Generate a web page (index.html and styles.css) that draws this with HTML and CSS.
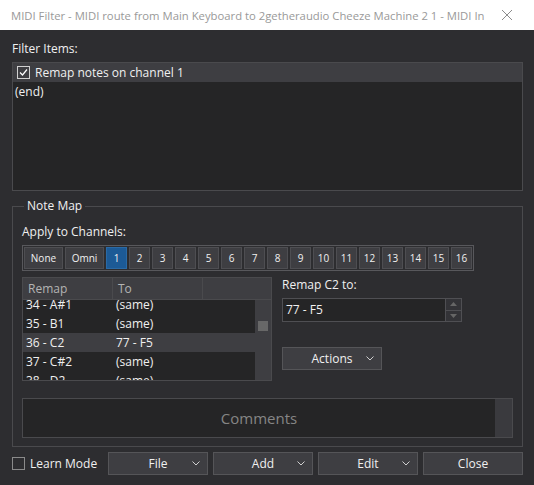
FILE: index.html
```html
<!DOCTYPE html>
<html lang="en">
<head>
    <meta charset="UTF-8">
    <title>MIDI Filter</title>
    <link rel="stylesheet" href="styles.css">
</head>
<body>
    <div class="window">
        <header class="titlebar">
            <span class="title">MIDI Filter - MIDI route from Main Keyboard to 2getheraudio Cheeze Machine 2 1 - MIDI In</span>
            <svg class="close-icon" width="12" height="12" viewBox="0 0 12 12">
                <path d="M1 1 L11 11 M11 1 L1 11" stroke="#8c8c8c" stroke-width="1" fill="none"/>
            </svg>
        </header>

        <main class="dialog">
            <div class="label">Filter Items:</div>
            <div class="filter-list">
                <div class="filter-row selected">
                    <span class="check">
                        <svg width="11" height="11" viewBox="0 0 11 11">
                            <path d="M2 5.5 L4.5 8 L9 2.5" stroke="#ffffff" stroke-width="1.2" fill="none"/>
                        </svg>
                    </span>
                    Remap notes on channel 1
                </div>
                <div class="filter-row">(end)</div>
            </div>

            <fieldset class="group">
                <legend>Note Map</legend>
                <div class="label">Apply to Channels:</div>
                <div class="channels">
                    <button class="ch wide">None</button>
                    <button class="ch wide">Omni</button>
                    <button class="ch active">1</button>
                    <button class="ch">2</button>
                    <button class="ch">3</button>
                    <button class="ch">4</button>
                    <button class="ch">5</button>
                    <button class="ch">6</button>
                    <button class="ch">7</button>
                    <button class="ch">8</button>
                    <button class="ch">9</button>
                    <button class="ch">10</button>
                    <button class="ch">11</button>
                    <button class="ch">12</button>
                    <button class="ch">13</button>
                    <button class="ch">14</button>
                    <button class="ch">15</button>
                    <button class="ch">16</button>
                </div>

                <div class="map-row">
                    <div class="note-list">
                        <div class="note-head">
                            <span class="col">Remap</span>
                            <span class="col">To</span>
                            <span class="col last"></span>
                        </div>
                        <div class="note-body">
                            <div class="note-rows">
                                <div class="note-row"><span>34 - A#1</span><span>(same)</span></div>
                                <div class="note-row"><span>35 - B1</span><span>(same)</span></div>
                                <div class="note-row selected"><span>36 - C2</span><span>77 - F5</span></div>
                                <div class="note-row"><span>37 - C#2</span><span>(same)</span></div>
                                <div class="note-row"><span>38 - D2</span><span>(same)</span></div>
                            </div>
                            <div class="scrollbar"><div class="thumb"></div></div>
                        </div>
                    </div>

                    <div class="remap-side">
                        <div class="label">Remap C2 to:</div>
                        <div class="spin">
                            <span class="spin-value">77 - F5</span>
                            <div class="spin-buttons">
                                <span class="spin-btn">
                                    <svg width="7" height="4" viewBox="0 0 7 4"><path d="M0 4 L3.5 0 L7 4 Z" fill="#666"/></svg>
                                </span>
                                <span class="spin-btn">
                                    <svg width="7" height="4" viewBox="0 0 7 4"><path d="M0 0 L3.5 4 L7 0 Z" fill="#666"/></svg>
                                </span>
                            </div>
                        </div>
                        <button class="drop actions">
                            <span>Actions</span>
                            <svg class="chev" width="8" height="5" viewBox="0 0 8 5"><path d="M0.5 0.5 L4 4 L7.5 0.5" stroke="#cfcfcf" fill="none"/></svg>
                        </button>
                    </div>
                </div>

                <div class="comments">
                    <div class="comments-text">Comments</div>
                    <div class="comments-scroll"></div>
                </div>
            </fieldset>

            <div class="bottom-bar">
                <label class="learn">
                    <span class="box"></span>
                    Learn Mode
                </label>
                <button class="drop">
                    <span>File</span>
                    <svg class="chev" width="8" height="5" viewBox="0 0 8 5"><path d="M0.5 0.5 L4 4 L7.5 0.5" stroke="#cfcfcf" fill="none"/></svg>
                </button>
                <button class="drop">
                    <span>Add</span>
                    <svg class="chev" width="8" height="5" viewBox="0 0 8 5"><path d="M0.5 0.5 L4 4 L7.5 0.5" stroke="#cfcfcf" fill="none"/></svg>
                </button>
                <button class="drop">
                    <span>Edit</span>
                    <svg class="chev" width="8" height="5" viewBox="0 0 8 5"><path d="M0.5 0.5 L4 4 L7.5 0.5" stroke="#cfcfcf" fill="none"/></svg>
                </button>
                <button class="plain">Close</button>
            </div>
        </main>
    </div>
</body>
</html>
```

FILE: styles.css
```css
/* General */
* {
    box-sizing: border-box;
}

body {
    margin: 0;
    padding: 0;
    background-color: #2d2d30;
    font-family: 'Open Sans', 'Noto Sans', sans-serif;
    font-size: 12px;
    color: #f0f0f0;
}

button {
    font-family: inherit;
    color: #f0f0f0;
    cursor: pointer;
}

.window {
    width: 534px;
    height: 485px;
    overflow: hidden;
}

/* Title bar */
.titlebar {
    height: 30px;
    background-color: #ffffff;
    display: flex;
    align-items: center;
    justify-content: space-between;
    padding: 0 21px 0 11px;
}

.title {
    color: #999999;
    font-size: 11.3px;
    white-space: nowrap;
}

/* Dialog body */
.dialog {
    padding: 11px 11px 0 12px;
}

.label {
    height: 16px;
    line-height: 16px;
    margin-bottom: 5px;
}

.filter-list {
    height: 129px;
    border: 1px solid #4a4a4d;
    background-color: #252526;
}

.filter-row {
    height: 19px;
    line-height: 19px;
    padding-left: 2px;
    display: flex;
    align-items: center;
}

.filter-row.selected {
    background-color: #3e3e42;
}

.check {
    width: 13px;
    height: 13px;
    border: 1px solid #d0d0d0;
    margin: 0 5px 0 2px;
    display: flex;
    align-items: center;
    justify-content: center;
}

/* Note Map group */
.group {
    margin: 7px 0 0 0;
    padding: 10px 9px 8px 9px;
    border: 1px solid #4a4a4d;
    min-width: 0;
}

.group legend {
    margin-left: 2px;
    padding: 0 3px;
    line-height: 16px;
}

.channels {
    display: flex;
    gap: 2px;
    width: 452px;
    padding: 1px;
    border: 1px solid #58585c;
}

.ch {
    width: 21px;
    height: 22px;
    padding: 0;
    font-size: 10px;
    background-color: #3e3e42;
    border: 1px solid #4e4e52;
}

.ch.wide {
    width: 39px;
}

.ch.active {
    background-color: #1c5a96;
    border-color: #2a6aa6;
}

.map-row {
    display: flex;
    margin-top: 6px;
    gap: 10px;
}

/* Note list */
.note-list {
    width: 250px;
    height: 104px;
    border: 1px solid #4a4a4d;
    display: flex;
    flex-direction: column;
}

.note-head {
    height: 22px;
    display: flex;
    background-color: #3e3e42;
    border-bottom: 1px solid #4a4a4d;
    color: #b4b4b4;
}

.note-head .col {
    width: 90px;
    padding-left: 5px;
    line-height: 22px;
    border-right: 1px solid #4a4a4d;
}

.note-head .col.last {
    flex: 1;
    border-right: none;
}

.note-body {
    flex: 1;
    display: flex;
    overflow: hidden;
}

.note-rows {
    flex: 1;
    background-color: #252526;
    overflow: hidden;
}

.note-row {
    height: 19px;
    line-height: 19px;
    display: flex;
    padding-left: 3px;
}

.note-row:first-child {
    margin-top: -5px;
}

.note-row span {
    width: 90px;
}

.note-row.selected {
    background-color: #3e3e42;
}

.scrollbar {
    width: 16px;
    background-color: #3e3e42;
    padding: 21px 0 0 3px;
}

.thumb {
    width: 10px;
    height: 10px;
    background-color: #686868;
}

/* Right side of the map */
.remap-side {
    width: 180px;
}

.remap-side .label {
    margin-bottom: 5px;
}

.spin {
    height: 24px;
    display: flex;
    border: 1px solid #4f4f53;
    background-color: #252526;
}

.spin-value {
    flex: 1;
    padding-left: 3px;
    line-height: 22px;
}

.spin-buttons {
    width: 16px;
    border-left: 1px solid #4f4f53;
    display: flex;
    flex-direction: column;
}

.spin-btn {
    flex: 1;
    display: flex;
    align-items: center;
    justify-content: center;
    background-color: #333337;
}

.spin-btn + .spin-btn {
    border-top: 1px solid #4f4f53;
}

.drop, .plain {
    position: relative;
    width: 100px;
    height: 23px;
    padding: 0;
    font-size: 12px;
    background-color: #3e3e42;
    border: 1px solid #555558;
}

.drop .chev {
    position: absolute;
    right: 7px;
    top: 8px;
}

.actions {
    margin-top: 25px;
    display: block;
}

/* Comments */
.comments {
    margin-top: 17px;
    height: 40px;
    display: flex;
    border: 1px solid #4a4a4d;
    background-color: #252526;
}

.comments-text {
    flex: 1;
    text-align: center;
    line-height: 38px;
    font-size: 15px;
    color: #858585;
}

.comments-scroll {
    width: 17px;
    background-color: #3a3a3e;
}

/* Bottom bar */
.bottom-bar {
    display: flex;
    align-items: center;
    gap: 5px;
    margin-top: 5px;
}

.learn {
    width: 91px;
    display: flex;
    align-items: center;
    gap: 5px;
}

.box {
    width: 13px;
    height: 13px;
    border: 1px solid #8a8a8a;
}
```
